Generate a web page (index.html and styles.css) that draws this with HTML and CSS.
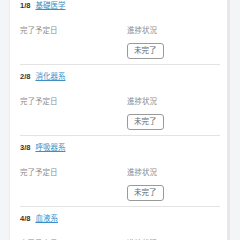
FILE: index.html
```html
<!DOCTYPE html>
<html lang="ja">
<head>
<meta charset="utf-8">
<link rel="stylesheet" href="styles.css">
</head>
<body>
<div class="page">
  <div class="side-left"></div>
  <main class="card">
    <div class="list">
      <section class="row">
        <div class="head"><span class="num">1/8</span><a class="link" href="#">基礎医学</a></div>
        <div class="fields">
          <div class="field"><div class="label">完了予定日</div></div>
          <div class="field"><div class="label">進捗状況</div><span class="badge">未完了</span></div>
        </div>
      </section>
      <section class="row">
        <div class="head"><span class="num">2/8</span><a class="link" href="#">消化器系</a></div>
        <div class="fields">
          <div class="field"><div class="label">完了予定日</div></div>
          <div class="field"><div class="label">進捗状況</div><span class="badge">未完了</span></div>
        </div>
      </section>
      <section class="row">
        <div class="head"><span class="num">3/8</span><a class="link" href="#">呼吸器系</a></div>
        <div class="fields">
          <div class="field"><div class="label">完了予定日</div></div>
          <div class="field"><div class="label">進捗状況</div><span class="badge">未完了</span></div>
        </div>
      </section>
      <section class="row">
        <div class="head"><span class="num">4/8</span><a class="link" href="#">血液系</a></div>
        <div class="fields">
          <div class="field"><div class="label">完了予定日</div></div>
          <div class="field"><div class="label">進捗状況</div><span class="badge">未完了</span></div>
        </div>
      </section>
    </div>
  </main>
  <div class="side-right"></div>
</div>
</body>
</html>
```
FILE: styles.css
```css
html, body {
  margin: 0;
  padding: 0;
  background: #f4f5f7;
  height: 100%;
  overflow: hidden;
}
body {
  font-family: "Liberation Sans", "Noto Sans CJK JP", sans-serif;
  font-size: 7.5px;
  color: #333;
}
.page {
  display: flex;
  height: 240px;
}
.side-left {
  width: 10px;
  flex: none;
  background: #f4f5f7;
  border-right: 1px solid #ececef;
  box-sizing: border-box;
}
.card {
  width: 200px;
  flex: none;
  background: #fff;
  border-right: 3px solid #e8e8ea;
  padding: 0 7px 0 10px;
  box-sizing: content-box;
  overflow: hidden;
}
.side-right {
  flex: 1;
  background: #f4f5f7;
}
.list {
  margin-top: -7px;
}
.row {
  border-top: 1px solid #e3e3e3;
  padding: 7px 0 5px;
}
.head {
  display: flex;
  align-items: center;
  gap: 5px;
  height: 10px;
  line-height: 10px;
  white-space: nowrap;
}
.num {
  font-weight: bold;
  color: #333;
}
.link {
  color: #3d8fc6;
  text-decoration: underline;
}
.fields {
  display: grid;
  grid-template-columns: 107px 1fr;
  margin-top: 15px;
}
.field {
  display: flex;
  flex-direction: column;
  align-items: flex-start;
}
.label {
  line-height: 10px;
  height: 10px;
  color: #8c8c8c;
  white-space: nowrap;
}
.badge {
  margin-top: 7px;
  border: 1px solid #9a9a9a;
  border-radius: 3px;
  padding: 0 6px;
  white-space: nowrap;
  text-align: center;
  line-height: 14px;
  color: #666;
}
```
